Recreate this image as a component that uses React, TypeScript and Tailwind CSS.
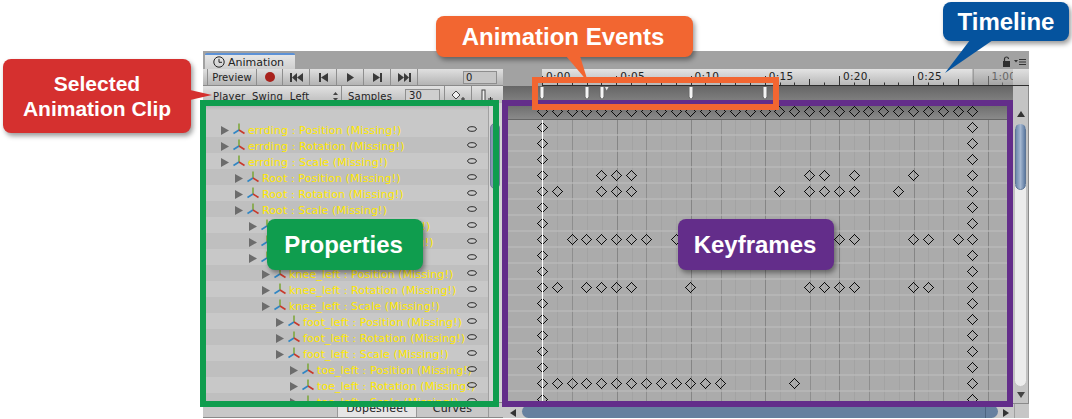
import React from "react";

const FRAME = 14.85;

const GROUPS = ["errding", "Root", "hip_left", "knee_left", "foot_left", "toe_left"];
const INDENTS = ["pl-[18px]", "pl-[32px]", "pl-[46px]", "pl-[59px]", "pl-[73px]", "pl-[87px]"];
const KINDS = ["Position", "Rotation", "Scale"];

const ROWS: { label: string; indent: string; dark: boolean }[] = [];
GROUPS.forEach((g, gi) =>
  KINDS.forEach((k, ki) =>
    ROWS.push({
      label: `${g} : ${k} (Missing!)`,
      indent: INDENTS[gi],
      dark: (gi * 3 + ki) % 2 === 1,
    })
  )
);

const ALL = Array.from({ length: 30 }, (_, i) => i);

const KEYS: number[][] = [
  [0, 29],
  [0, 29],
  [0, 29],
  [0, 4, 5, 6, 18, 19, 21, 25, 29],
  [0, 1, 4, 5, 6, 16, 18, 19, 20, 21, 24, 29],
  [0, 29],
  [0, 29],
  [0, 2, 3, 4, 5, 6, 7, 9, 20, 21, 25, 26, 28, 29],
  [0, 29],
  [0, 29],
  [0, 1, 3, 4, 5, 6, 10, 18, 19, 20, 21, 25, 26, 29],
  [0, 29],
  [0, 29],
  [0, 29],
  [0, 29],
  [0, 29],
  [0, 1, 2, 3, 4, 5, 6, 7, 8, 9, 10, 11, 12, 17, 29],
  [0, 29],
];

const GRID_COLS = "grid grid-cols-[32px_repeat(31,14.85px)]";

function Diamond({ f }: { f: number }) {
  return (
    <svg
      width="11"
      height="11"
      viewBox="0 0 11 11"
      className="justify-self-center"
      shapeRendering="crispEdges"
      style={{ gridColumnStart: f + 2, gridRowStart: 1 }}
    >
      <polygon points="5.5,0.5 10.5,5.5 5.5,10.5 0.5,5.5" fill="none" stroke="#0c0c0c" strokeWidth="1" />
    </svg>
  );
}

function EventMarker({ f, flag }: { f: number; flag?: boolean }) {
  return (
    <svg
      width="14"
      height="14"
      viewBox="0 0 14 14"
      className="justify-self-center"
      style={{ gridColumnStart: f + 2, gridRowStart: 1 }}
    >
      <polygon points="5,0.5 9,0.5 9,11 7,13.5 5,11" fill="#f4f4f4" stroke="#6a6a6a" strokeWidth="1" />
      {flag && <polygon points="10,1 13.5,1 11.7,4.5" fill="#e8e8e8" />}
    </svg>
  );
}

function AxisIcon() {
  return (
    <svg width="12" height="12" viewBox="0 0 12 12" className="shrink-0">
      <line x1="6" y1="7" x2="6" y2="0.5" stroke="#7fa83e" strokeWidth="1.6" />
      <line x1="6" y1="7" x2="0.5" y2="10.5" stroke="#2f86c4" strokeWidth="1.6" />
      <line x1="6" y1="7" x2="11.5" y2="10.5" stroke="#c8392b" strokeWidth="1.6" />
    </svg>
  );
}

function Eye() {
  return (
    <svg width="10" height="6" viewBox="0 0 10 6" className="shrink-0">
      <ellipse cx="5" cy="3" rx="4.3" ry="2.3" fill="#c9c9c9" stroke="#2a2a2a" strokeWidth="1" />
    </svg>
  );
}

function TreeRow({ label, indent, dark }: { label: string; indent: string; dark: boolean }) {
  return (
    <div className={`h-4 shrink-0 flex items-center pr-[11px] ${indent} ${dark ? "bg-[#bfbfbf]" : "bg-[#c8c8c8]"}`}>
      <svg width="8" height="9" viewBox="0 0 8 9" className="shrink-0 mr-[4px] mt-[2px]">
        <polygon points="0,0 8,4.5 0,9" fill="#6c6c6c" />
      </svg>
      <AxisIcon />
      <span className="ml-[3px] flex-1 min-w-0 whitespace-nowrap text-[11px] tracking-[0.1px] leading-none text-[#ffe900] mt-[2px]">
        {label}
      </span>
      <Eye />
    </div>
  );
}

function TBtn({ className, children }: { className: string; children: React.ReactNode }) {
  return <div className={`flex items-center justify-center border-r border-[#8e8e8e] h-full ${className}`}>{children}</div>;
}

function Transport({ kind }: { kind: "first" | "prev" | "play" | "next" | "last" }) {
  const d: Record<string, React.ReactNode> = {
    first: (
      <>
        <rect x="0" y="1" width="2" height="9" />
        <polygon points="7,1 7,10 2,5.5" />
        <polygon points="13,1 13,10 7,5.5" />
      </>
    ),
    prev: (
      <>
        <rect x="2" y="1" width="2" height="9" />
        <polygon points="11,1 11,10 4,5.5" />
      </>
    ),
    play: <polygon points="3,1 3,10 10,5.5" />,
    next: (
      <>
        <polygon points="2,1 2,10 9,5.5" />
        <rect x="9" y="1" width="2" height="9" />
      </>
    ),
    last: (
      <>
        <polygon points="0,1 0,10 6,5.5" />
        <polygon points="6,1 6,10 11,5.5" />
        <rect x="11" y="1" width="2" height="9" />
      </>
    ),
  };
  return (
    <svg width="13" height="11" viewBox="0 0 13 11" fill="#3a3a3a">
      {d[kind]}
    </svg>
  );
}

function LeftPanel() {
  return (
    <div className="w-[300px] shrink-0 flex flex-col h-full">
      <div className="h-[17px] shrink-0 flex items-center pl-[4px] bg-gradient-to-b from-[#e0e0e0] to-[#b4b4b4] border-b border-[#8a8a8a] text-[10px] tracking-[0.1px] text-[#222]">
        <TBtn className="w-[50px] border-l border-l-[#8e8e8e]">Preview</TBtn>
        <TBtn className="w-[26px]">
          <span className="block w-[10px] h-[10px] rounded-full bg-[#a8221d]" />
        </TBtn>
        <TBtn className="w-[27px]"><Transport kind="first" /></TBtn>
        <TBtn className="w-[27px]"><Transport kind="prev" /></TBtn>
        <TBtn className="w-[27px]"><Transport kind="play" /></TBtn>
        <TBtn className="w-[27px]"><Transport kind="next" /></TBtn>
        <TBtn className="w-[27px]"><Transport kind="last" /></TBtn>
        <div className="ml-[45px] w-[34px] h-[13px] bg-[#c6c6c6] border border-[#8e8e8e] pl-[2px] leading-[11px]">0</div>
      </div>
      <div className="h-[17px] shrink-0 flex items-start bg-gradient-to-b from-[#e2e2e2] to-[#bcbcbc] text-[10px] tracking-[0.2px] text-[#222]">
        <div className="w-[139px] h-full flex items-center border-r border-[#8e8e8e] pl-[10px] pr-[3px] justify-between pt-[3px]">
          <span className="whitespace-pre">Player  Swing  Left</span>
          <svg width="5" height="9" viewBox="0 0 5 9" fill="#444">
            <polygon points="2.5,0 5,3 0,3" />
            <polygon points="0,6 5,6 2.5,9" />
          </svg>
        </div>
        <div className="w-[103px] h-full flex items-center border-r border-[#8e8e8e] pl-[6px] pt-[3px]">
          <span className="flex-1">Samples</span>
          <div className="w-[35px] h-[13px] mr-[4px] -mt-[1px] bg-[#cfcfcf] border border-[#8e8e8e] pl-[3px] leading-[11px]">30</div>
        </div>
        <div className="w-[27px] h-full flex items-center justify-center border-r border-[#8e8e8e] pt-[2px]">
          <svg width="16" height="12" viewBox="0 0 16 12">
            <polygon points="6,1 10,5 6,9 2,5" fill="#eee" stroke="#444" />
            <path d="M11 9h4M13 7v4" stroke="#333" />
          </svg>
        </div>
        <div className="w-[30px] h-full flex items-center justify-center pt-[2px]">
          <svg width="14" height="14" viewBox="0 0 14 14">
            <rect x="2" y="1" width="3" height="11" fill="#eee" stroke="#444" />
            <path d="M8 10h5M10.5 8v5" stroke="#333" />
          </svg>
        </div>
      </div>
      <div className="flex flex-1 min-h-0">
        <div className="w-[285px] shrink-0 flex flex-col overflow-hidden">
          <div className="h-[18px] shrink-0 bg-gradient-to-b from-[#a8a8a8] to-[#c8c8c8] to-40%" />
          {ROWS.map((r) => (
            <TreeRow key={r.label} {...r} />
          ))}
        </div>
        <div className="flex-1 bg-[#d4d4d4] pt-[20px] border-l border-[#a0a0a0]">
          <div className="h-[66px] w-[10px] ml-[1px] rounded-full bg-[#8496b0] border border-[#6d7f99]" />
        </div>
      </div>
      <div className="h-[15px] shrink-0 flex items-end bg-[#c8c8c8] pl-[134px] border-t border-[#8a8a8a] text-[11px] tracking-[0.2px] text-[#222]">
        <div className="w-[80px] h-full bg-[#e6e6e6] border-x border-[#999] text-center leading-[12px]">Dopesheet</div>
        <div className="w-[72px] h-full text-center leading-[12px] border-r border-[#999]">Curves</div>
      </div>
    </div>
  );
}

function Ruler() {
  const labels = ["0:00", "0:05", "0:10", "0:15", "0:20", "0:25", "1:00"];
  const med = [3, 8, 13, 18, 22, 28];
  const frames = Array.from({ length: 32 }, (_, i) => i);
  return (
    <div className="h-[17px] shrink-0 flex">
      <div className="w-[39px] shrink-0 bg-[#a2a2a2]" />
      <div className="relative w-[471px] shrink-0 overflow-hidden bg-gradient-to-b from-[#e4e4e4] to-[#b8b8b8] border-b border-[#2e2e2e]">
        <svg width="471" height="17" className="absolute left-0 top-0">
          <rect x={29 * FRAME} y="0" width="60" height="17" fill="#000" opacity="0.1" />
          <line x1={29 * FRAME + 0.5} y1="0" x2={29 * FRAME + 0.5} y2="17" stroke="#8a8a8a" />
          {frames.map((f) => {
            const x = Math.round(f * FRAME) + 0.5;
            const h = f % 5 === 0 ? 9 : med.includes(f) ? 6 : 2.5;
            return <line key={f} x1={x} y1={16 - h} x2={x} y2="16" stroke={f >= 29 ? "#666" : "#333"} />;
          })}
        </svg>
        <div className="relative flex text-[10.5px] tracking-[0.3px] leading-[15px] text-[#222]">
          {labels.map((l, i) => (
            <span key={l} className={`w-[74.25px] shrink-0 pl-[4px] ${i === 6 ? "text-[#666]" : ""}`}>
              {l}
            </span>
          ))}
        </div>
      </div>
      <div className="flex-1 bg-gradient-to-b from-[#e0e0e0] to-[#bdbdbd] border-b border-[#2e2e2e]" />
    </div>
  );
}

function GridLines() {
  const lines = Array.from({ length: 31 }, (_, i) => i);
  const mids = [2, 7, 12, 18, 22, 27];
  return (
    <svg width="510" height="283" className="absolute left-0 top-0">
      {lines.map((f) => {
        const x = Math.round(39.4 + f * FRAME) + 0.5;
        const major = f % 5 === 0;
        const mid = mids.includes(f);
        return <line key={f} x1={x} y1="0" x2={x} y2="283" stroke={major ? "#858585" : mid ? "#8e8e8e" : "#a3a3a3"} />;
      })}
    </svg>
  );
}

function Dopesheet() {
  return (
    <div className="w-[510px] shrink-0 flex flex-col">
      <div className={`${GRID_COLS} h-[17px] shrink-0 bg-gradient-to-b from-[#666666] to-[#838383]`}>
        <EventMarker f={0} />
        <EventMarker f={3} />
        <EventMarker f={4} flag />
        <EventMarker f={10} />
        <EventMarker f={15} />
      </div>
      <div className={`${GRID_COLS} h-[17px] shrink-0 items-center bg-gradient-to-b from-[#6a6a6a] to-[#8a8a8a] border-b border-[#666666]`}>
        {ALL.map((f) => (
          <Diamond key={f} f={f} />
        ))}
      </div>
      <div className="relative h-[283px] shrink-0 overflow-hidden bg-[#ababab]">
        <GridLines />
        {KEYS.map((row, i) => (
          <div key={i} className={`${GRID_COLS} relative h-4 box-border items-center border-b-2 border-[#bdbdbd]/60`}>
            {row.map((f) => (
              <Diamond key={f} f={f} />
            ))}
          </div>
        ))}
        <div className="absolute left-[39px] top-0 bottom-0 w-px bg-white" />
      </div>
    </div>
  );
}

function VScroll() {
  return (
    <div className="flex-1 flex flex-col items-center bg-[#c4c4c4] border-r border-[#8a8a8a]">
      <div className="h-[34px] shrink-0 w-full flex items-end justify-center pb-[3px]">
        <svg width="8" height="6" viewBox="0 0 8 6" fill="#333">
          <polygon points="4,0 8,6 0,6" />
        </svg>
      </div>
      <div className="w-[13px] h-[264px] mt-[3px] rounded-b-full rounded-t-full bg-[#ececec] border border-[#c2c2c2] overflow-hidden">
        <div className="h-[67px] -mt-px bg-gradient-to-r from-[#6e89ad] via-[#a3b6cf] to-[#5f7ba1] rounded-full border border-[#5e7696]" />
      </div>
      <div className="flex-1 flex items-center justify-center">
        <svg width="8" height="6" viewBox="0 0 8 6" fill="#444">
          <polygon points="0,0 8,0 4,6" />
        </svg>
      </div>
    </div>
  );
}

function HScroll() {
  return (
    <div className="h-[15px] shrink-0 flex items-end bg-[#c8c8c8] border-t border-[#8a8a8a]">
      <div className="w-[18px] h-[11px] flex items-center justify-center shrink-0 pl-[2px]">
        <svg width="6" height="8" viewBox="0 0 6 8" fill="#333">
          <polygon points="6,0 6,8 0,4" />
        </svg>
      </div>
      <div className="w-[476px] h-[13px] ml-[1px] rounded-full bg-[#66809f] flex justify-end pr-[12px] shrink-0">
        <span className="block w-px h-full bg-[#4c6480]" />
      </div>
      <div className="w-[16px] h-[11px] flex items-center justify-center shrink-0">
        <svg width="6" height="8" viewBox="0 0 6 8" fill="#333">
          <polygon points="0,0 6,4 0,8" />
        </svg>
      </div>
      <div className="flex-1 h-full bg-[#c6c6c6] border-l border-[#a0a0a0]" />
    </div>
  );
}

function Window() {
  return (
    <div className="w-[826px] h-[367px] flex flex-col bg-[#b8b8b8] font-['DejaVu_Sans',sans-serif] border-b border-[#8a8a8a]">
      <div className="h-[18px] shrink-0 flex items-end justify-between bg-[#a2a2a2] pl-[2px] pr-[3px]">
        <div className="w-[90px] h-[16px] flex items-center gap-[3px] pl-[8px] rounded-t-[2px] bg-gradient-to-b from-[#e6e6e6] to-[#cfcfcf] border-t-2 border-[#5c91d6] text-[11px] leading-none text-[#222]">
          <svg width="12" height="12" viewBox="0 0 12 12" fill="none" stroke="#222" strokeWidth="1">
            <circle cx="6" cy="6" r="5.2" />
            <path d="M6 2.8V6.3H9" />
          </svg>
          Animation
        </div>
        <div className="flex items-center gap-[3px] pb-[2px]">
          <svg width="9" height="11" viewBox="0 0 9 11">
            <rect x="1" y="5" width="7" height="6" fill="#2e2e2e" />
            <path d="M2.5 5V3a2 2 0 0 1 4 0" fill="none" stroke="#2e2e2e" strokeWidth="1.2" />
          </svg>
          <svg width="12" height="8" viewBox="0 0 12 8">
            <polygon points="0,2 4,2 2,4.5" fill="#333" />
            <path d="M5 1.5h7M5 4h7M5 6.5h7" stroke="#333" />
          </svg>
        </div>
      </div>
      <div className="flex flex-1 min-h-0">
        <LeftPanel />
        <div className="flex-1 flex flex-col min-w-0">
          <Ruler />
          <div className="flex shrink-0">
            <Dopesheet />
            <VScroll />
          </div>
          <HScroll />
        </div>
      </div>
    </div>
  );
}

const CALLOUT =
  "absolute flex items-center justify-center text-center font-['Liberation_Sans',sans-serif] font-bold text-white shadow-[2px_3px_5px_rgba(0,0,0,0.4)]";

export default function App() {
  return (
    <div className="relative w-[1072px] h-[419px] overflow-hidden bg-white pl-[203px] pt-[51px]">
      <Window />

      <div className="absolute left-[200px] top-[100px] w-[299px] h-[307px] border-[6px] border-[#0f9d4e]" />
      <div className="absolute left-[502px] top-[100px] w-[511px] h-[307px] border-[6px] border-[#632d8a]" />
      <div className="absolute left-[532px] top-[77px] w-[247px] h-[33px] border-[6px] border-[#f26631]" />

      <div className={`${CALLOUT} left-[3px] top-[59px] w-[188px] h-[74px] rounded-[8px] bg-[#d5302f] text-[21px] leading-[25px]`}>
        Selected
        <br />
        Animation Clip
      </div>
      <div className={`${CALLOUT} left-[436px] top-[16px] w-[257px] h-[41px] rounded-[8px] bg-[#f26631] text-[24px] pr-[3px]`}>
        Animation Events
      </div>
      <div className={`${CALLOUT} left-[943px] top-[2px] w-[126px] h-[39px] rounded-[8px] bg-[#05539e] text-[24px]`}>
        Timeline
      </div>
      <div className={`${CALLOUT} left-[267px] top-[219px] w-[156px] h-[51px] rounded-[8px] bg-[#0f9d4e] text-[24px] pr-[3px]`}>
        Properties
      </div>
      <div className={`${CALLOUT} left-[678px] top-[219px] w-[156px] h-[51px] rounded-[8px] bg-[#632d8a] text-[24px] pr-[2px]`}>
        Keyframes
      </div>

      <svg width="1072" height="419" className="absolute left-0 top-0 pointer-events-none">
        <polygon points="190,90 190,100 212,95" fill="#d5302f" />
        <polygon points="566,56 580,56 588,82" fill="#f26631" />
        <polygon points="970,40 993,40 945,73" fill="#05539e" />
      </svg>
    </div>
  );
}
